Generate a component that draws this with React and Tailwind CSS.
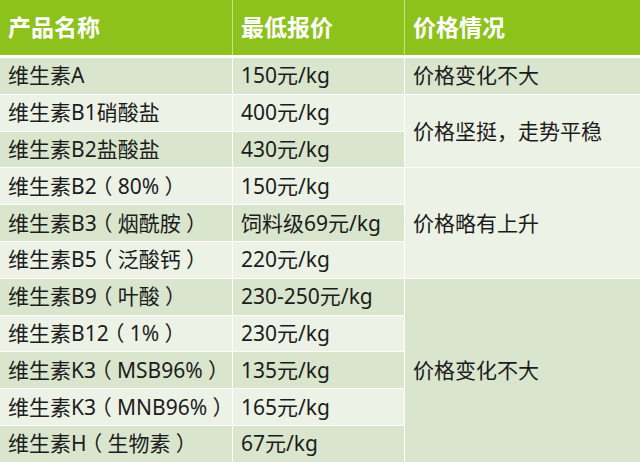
function P({ c }) {
  return (
    <span className="inline-block w-[1em] text-center [font-feature-settings:'halt']">{c}</span>
  );
}

function T({ s }) {
  const parts = [];
  let buf = "";
  for (const ch of s) {
    if (ch === "（" || ch === "）") {
      if (buf) parts.push(buf);
      buf = "";
      parts.push(<P key={parts.length} c={ch} />);
    } else buf += ch;
  }
  if (buf) parts.push(buf);
  return <>{parts}</>;
}

export default function App() {
  const font = { fontFamily: '"Noto Sans", "Noto Sans CJK SC", sans-serif' };
  const rows = [
    ["维生素A", "150元/kg"],
    ["维生素B1硝酸盐", "400元/kg"],
    ["维生素B2盐酸盐", "430元/kg"],
    ["维生素B2（80%）", "150元/kg"],
    ["维生素B3（烟酰胺）", "饲料级69元/kg"],
    ["维生素B5（泛酸钙）", "220元/kg"],
    ["维生素B9（叶酸）", "230-250元/kg"],
    ["维生素B12（1%）", "230元/kg"],
    ["维生素K3（MSB96%）", "135元/kg"],
    ["维生素K3（MNB96%）", "165元/kg"],
    ["维生素H（生物素）", "67元/kg"],
  ];
  const dark = "bg-[#d9e5cc]";
  const light = "bg-[#edf2e6]";
  const rowStart = [
    "row-start-1", "row-start-2", "row-start-3", "row-start-4", "row-start-5", "row-start-6",
    "row-start-7", "row-start-8", "row-start-9", "row-start-10", "row-start-11",
  ];
  const cell = "flex items-center pl-2 text-[21px] leading-none text-[#1c1c1c] whitespace-nowrap overflow-hidden";
  const head = "flex items-center pl-2 bg-[#8dc21c] text-white font-bold text-[23px] leading-none";
  return (
    <div className="w-[640px] h-[462px] overflow-hidden bg-white" style={font}>
      <div className="grid grid-cols-[232px_171px_1fr] gap-x-[1px] h-[55px] bg-[#c6e08a]">
        <div className={head}>产品名称</div>
        <div className={head}>最低报价</div>
        <div className={head}>价格情况</div>
      </div>
      <div className="mt-[3px] grid grid-cols-[232px_171px_1fr] grid-rows-[repeat(11,35.8px)] gap-[1px]">
        {rows.map((r, i) => (
          <div key={"a" + i} className={`${cell} col-start-1 ${rowStart[i]} ${i % 2 === 0 ? dark : light}`}>
            <span><T s={r[0]} /></span>
          </div>
        ))}
        {rows.map((r, i) => (
          <div key={"b" + i} className={`${cell} col-start-2 ${rowStart[i]} ${i % 2 === 0 ? dark : light}`}>{r[1]}</div>
        ))}
        <div className={`${cell} col-start-3 row-start-1 ${dark}`}>价格变化不大</div>
        <div className={`${cell} col-start-3 row-start-2 row-span-2 ${light}`}>价格坚挺，走势平稳</div>
        <div className={`${cell} col-start-3 row-start-4 row-span-3 ${light}`}>价格略有上升</div>
        <div className={`${cell} col-start-3 row-start-7 row-span-5 ${dark}`}>价格变化不大</div>
      </div>
    </div>
  );
}
